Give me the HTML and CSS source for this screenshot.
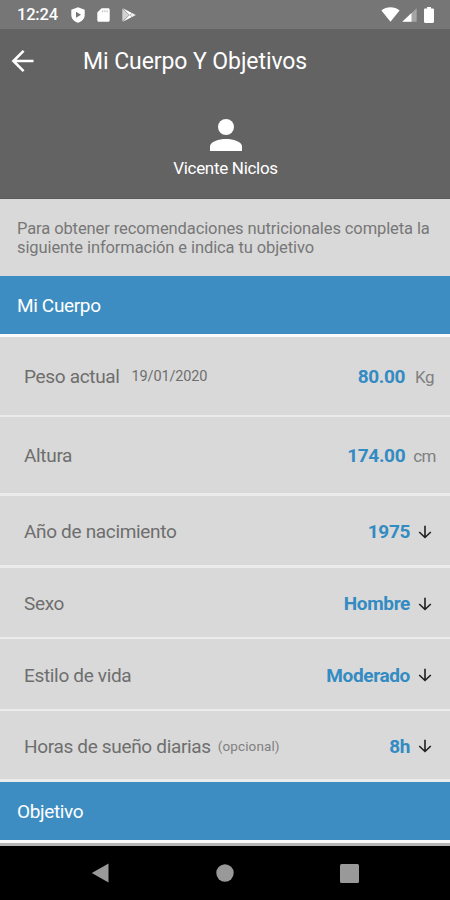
FILE: index.html
```html
<!DOCTYPE html>
<html lang="es">
<head>
<meta charset="utf-8">
<title>Mi Cuerpo Y Objetivos</title>
<link rel="stylesheet" href="styles.css">
</head>
<body>
<div class="phone">
  <div class="status">
    <span class="clock">12:24</span>
    <svg class="shield" width="14" height="16" viewBox="0 0 14 16"><path fill="#fff" fill-rule="evenodd" d="M7 0.3 13.7 2.7V8c0 3.5-2.7 6.4-6.7 7.8C3 14.4.3 11.5.3 8V2.7ZM5 4.7v6L10 7.7Z"/></svg>
    <svg class="card" width="13" height="14" viewBox="0 0 13 14"><path fill="#fff" d="M4.6.2h6.6c.9 0 1.5.6 1.5 1.5v10.6c0 .9-.6 1.5-1.5 1.5H1.8c-.9 0-1.500-.6-1.500-1.500V4.500Z"/><path fill="#c4c4c4" d="M5 2.200h1.200v2H5ZM7.300 2.200h1.200v2H7.300ZM9.600 2.200h1.100v2H9.600Z"/></svg>
    <svg class="play" width="14" height="14" viewBox="0 0 14 14"><path fill="#d2d2d2" d="M.3.500v13L7 7Z"/><path fill="#fff" d="M.8.200 10 4.900 7.500 7ZM.8 13.800 10 9.100 7.500 7Z"/><path fill="#eee" d="m10.200 5 3.600 2-3.600 2L8 7Z"/></svg>
    <svg class="wifi" width="19" height="15" viewBox="0 0 19 15"><path fill="#fff" d="M.4 3.400C5.600-.7 13.400-.7 18.600 3.400L9.500 14.800Z"/></svg>
    <svg class="signal" width="15" height="14" viewBox="0 0 15 14"><path fill="#a5a5a5" d="M14.700.2v13.600H.3Z"/><path fill="#fff" d="M9.500 5.100v8.700H.3Z"/></svg>
    <svg class="battery" width="10" height="16" viewBox="0 0 10 16"><path fill="#fff" d="M3 0h4v1.600h1.800c.7 0 1.200.5 1.200 1.200v11.800c0 .8-.5 1.300-1.200 1.300H1.200C.5 15.900 0 15.400 0 14.600V2.800c0-.7.5-1.200 1.200-1.200H3Z"/></svg>
  </div>
  <header class="header">
    <div class="bar">
      <svg class="back" width="24" height="24" viewBox="0 0 24 24"><path fill="none" stroke="#fff" stroke-width="2.600" d="M22.500 12H2.500M12.600 1.800 2.400 12l10.200 10.200"/></svg>
      <h1 class="title">Mi Cuerpo Y Objetivos</h1>
    </div>
    <div class="profile">
      <svg width="32" height="32" viewBox="0 0 32 32"><circle cx="16" cy="8" r="8" fill="#fff"/><path fill="#fff" d="M0 32v-4.500C0 22.500 9 20 16 20s16 2.500 16 7.500V32Z"/></svg>
      <span class="name">Vicente Niclos</span>
    </div>
  </header>
  <p class="intro"><span>Para obtener recomendaciones nutricionales completa la</span><br><span>siguiente información e indica tu objetivo</span></p>
  <h2 class="section">Mi Cuerpo</h2>
  <div class="rows">
    <div class="row r1"><span class="label">Peso actual</span><span class="date">19/01/2020</span><span class="value">80.00</span><span class="unit">Kg</span></div>
    <div class="row r2"><span class="label">Altura</span><span class="value">174.00</span><span class="unit">cm</span></div>
    <div class="row r3"><span class="label">Año de nacimiento</span><span class="value">1975</span><svg class="down" width="14" height="14" viewBox="0 0 14 14"><path d="M7 .8v11.700M1.200 7 7 12.500 12.800 7"/></svg></div>
    <div class="row r4"><span class="label">Sexo</span><span class="value">Hombre</span><svg class="down" width="14" height="14" viewBox="0 0 14 14"><path d="M7 .8v11.700M1.200 7 7 12.500 12.800 7"/></svg></div>
    <div class="row r5"><span class="label">Estilo de vida</span><span class="value">Moderado</span><svg class="down" width="14" height="14" viewBox="0 0 14 14"><path d="M7 .8v11.700M1.200 7 7 12.500 12.800 7"/></svg></div>
    <div class="row r6"><span class="label">Horas de sueño diarias</span><span class="optional">(opcional)</span><span class="value">8h</span><svg class="down" width="14" height="14" viewBox="0 0 14 14"><path d="M7 .8v11.700M1.200 7 7 12.500 12.800 7"/></svg></div>
  </div>
  <h2 class="section last">Objetivo</h2>
  <nav class="nav">
    <svg width="18" height="20" viewBox="0 0 18 20"><path fill="#999" d="M17.500 .500v19L.8 10Z"/></svg>
    <svg width="18" height="18" viewBox="0 0 18 18"><circle cx="9" cy="9" r="8.700" fill="#999"/></svg>
    <svg width="19" height="19" viewBox="0 0 19 19"><rect width="19" height="19" rx="1.500" fill="#999"/></svg>
  </nav>
</div>
</body>
</html>
```
FILE: styles.css
```css
* { box-sizing: border-box; }
body { margin: 0; font-family: Roboto, sans-serif; }
h1, h2, p { margin: 0; font-weight: 400; }
svg { display: block; flex: none; }
span { white-space: nowrap; }
.phone { width: 450px; height: 900px; background: #d9d9d9; overflow: hidden; display: flex; flex-direction: column; }
.status { flex: none; height: 29px; background: #767676; display: flex; align-items: center; padding: 0 16px 0 17px; color: #fff; }
.clock { width: 54px; font-size: 16.5px; font-weight: 500; letter-spacing: -0.2px; }
.card { margin-left: 12px; }
.play { margin-left: 12px; }
.wifi { margin-left: auto; }
.signal { margin-left: 2px; }
.battery { margin-left: 7px; }
.header { flex: none; height: 170px; background: #636363; color: #fff; border-bottom: 1px solid #595959; }
.bar { height: 64px; display: flex; align-items: center; padding-left: 11px; }
.title { margin-left: 48px; padding-top: 2px; font-size: 23px; line-height: 30px; letter-spacing: -0.08px; white-space: nowrap; }
.profile { display: flex; flex-direction: column; align-items: center; padding: 26px 0 0 1px; }
.name { margin-top: 6px; font-size: 17px; line-height: 22px; letter-spacing: -0.3px; }
.intro { flex: none; height: 77px; padding: 20px 0 0 17px; font-size: 16.5px; line-height: 19px; letter-spacing: -0.1px; color: #777; }
.section { flex: none; height: 61px; background: #3e8dc2; border-bottom: 3px solid #fafafa; padding-left: 17px; font-size: 19px; line-height: 60px; letter-spacing: -0.35px; color: #fff; }
.rows { flex: none; display: grid; grid-template-rows: 80px 79px 72px 71px 72px 71px; }
.row { display: flex; align-items: center; border-bottom: 2px solid #ebebeb; padding: 2px 18px 0 24px; color: #6e6e6e; }
.r2, .r3, .r6 { border-bottom-width: 3px; }
.label { font-size: 19px; letter-spacing: -0.33px; }
.date { margin-left: 12px; font-size: 14.5px; letter-spacing: -0.15px; }
.optional { margin-left: 7px; font-size: 13.5px; letter-spacing: 0.1px; color: #808080; }
.value { margin-left: auto; font-size: 19px; font-weight: 700; letter-spacing: -0.35px; color: #338bc3; }
.unit { margin-left: 10px; font-size: 17px; letter-spacing: -0.5px; color: #808080; }
.r1, .r2 { padding-top: 1px; }
.r1 { padding-right: 16px; }
.r2 { padding-right: 14px; }
.r2 .unit { margin-left: 8px; }
.down { margin-left: 8px; fill: none; stroke: #202020; stroke-width: 1.600; }
.last { height: 64px; border-bottom: 0; background: linear-gradient(#3e8dc2 58px, #fafafa 58px 61px, #b5b5b5 61px); }
.nav { flex: none; height: 54px; background: #000; display: flex; align-items: center; padding: 0 91px; justify-content: space-between; }
```
